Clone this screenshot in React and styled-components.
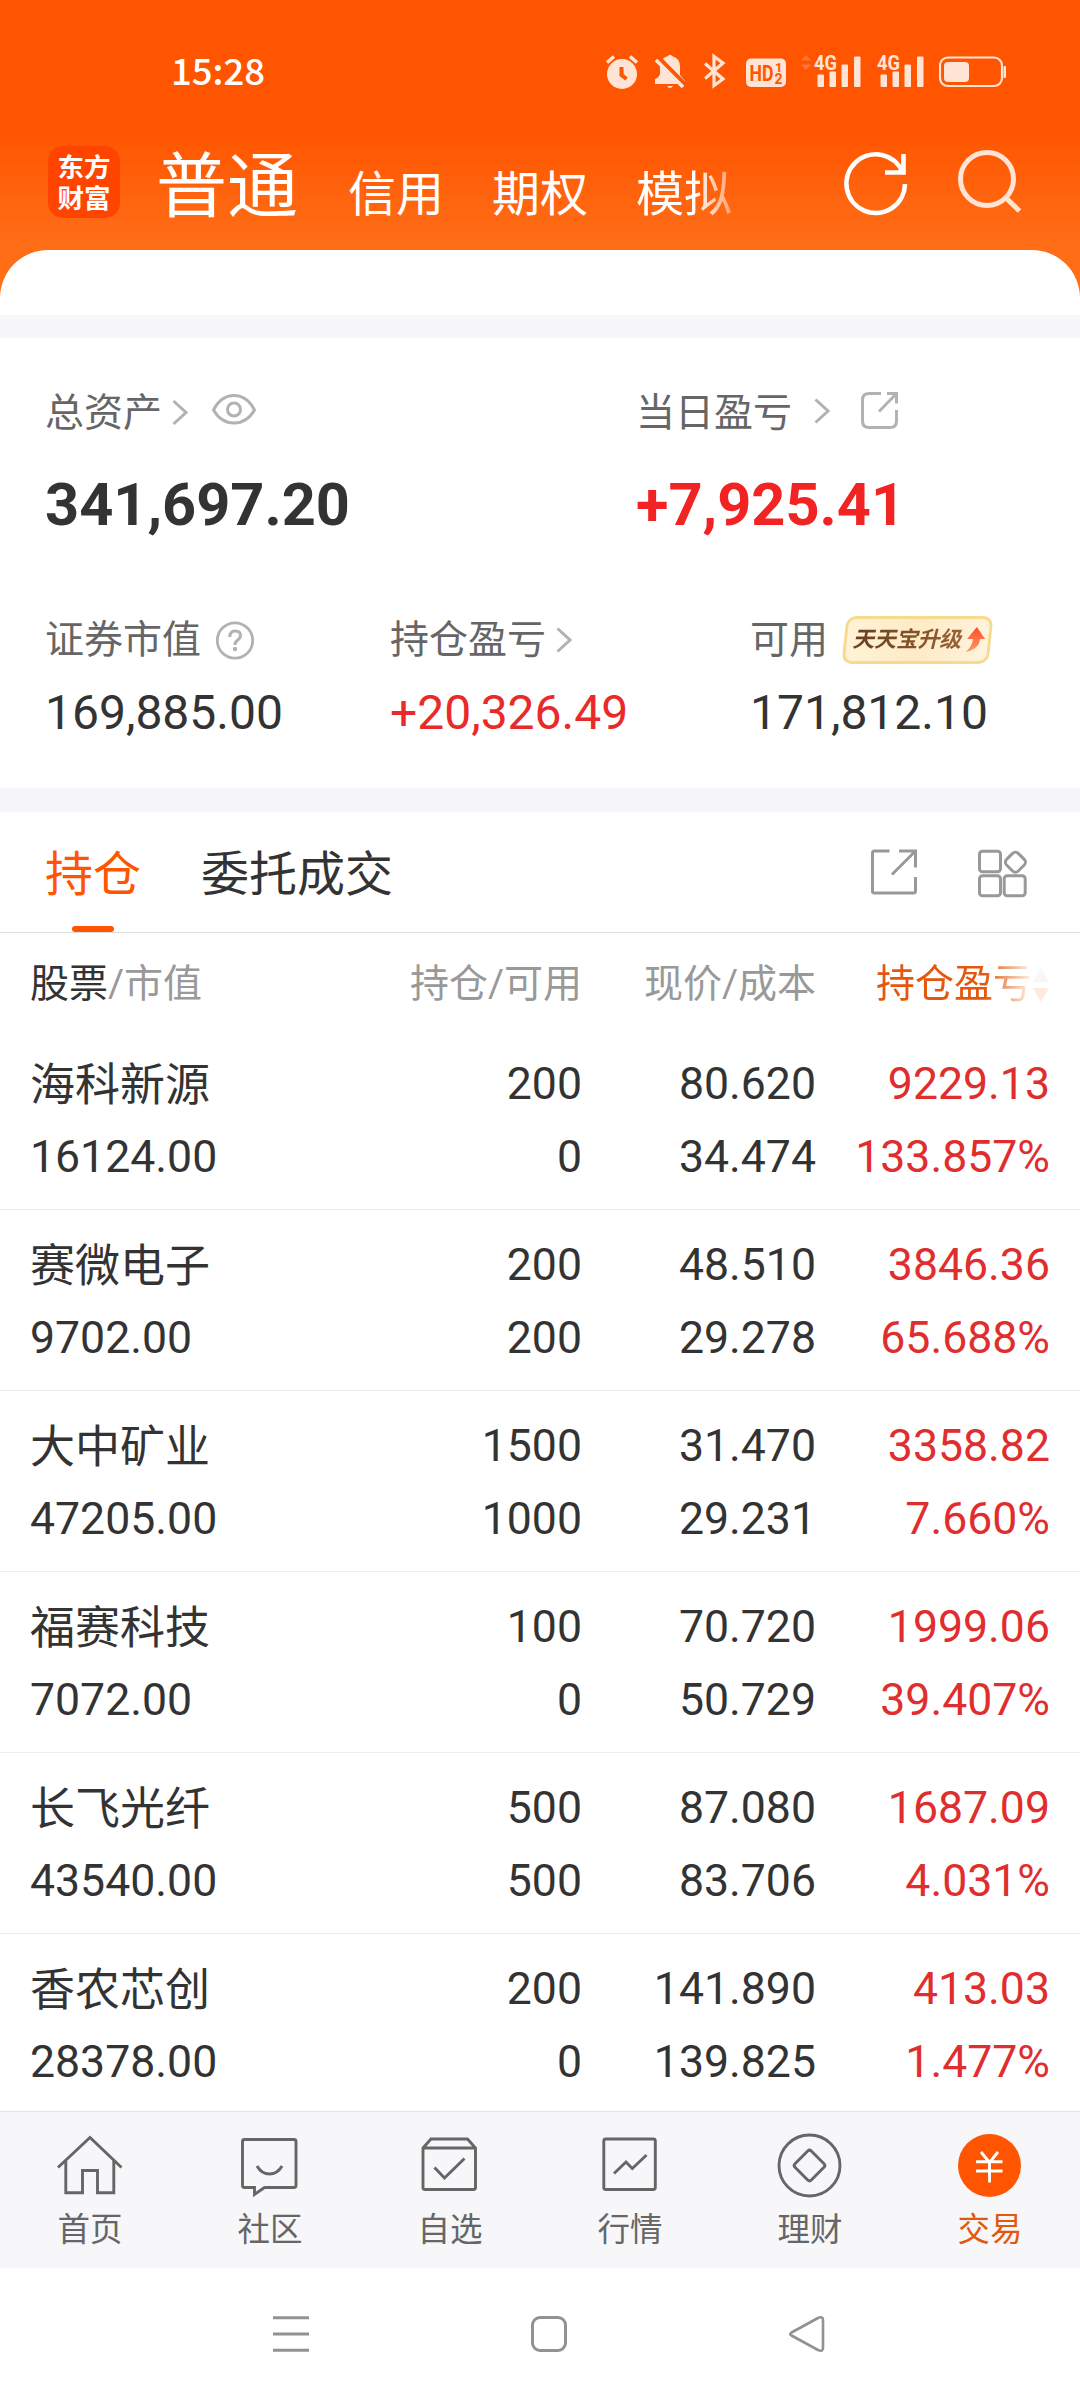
import React from 'react'
import styled, { createGlobalStyle } from 'styled-components'

const GlobalStyle = createGlobalStyle`
    * {
        box-sizing: border-box;
    }
    body {
        margin: 0;
        background: #fff;
        font-family: Roboto, "Noto Sans CJK SC", sans-serif;
        color: #333;
    }
    svg {
        display: block;
        flex: none;
    }
`;

const Screen = styled.div`
    width: 1080px;
    height: 2400px;
    display: flex;
    flex-direction: column;
    overflow: hidden;
    white-space: nowrap;
`;

/* ---------- header ---------- */

const Header = styled.header`
    height: 315px;
    flex: none;
    display: flex;
    flex-direction: column;
    background: linear-gradient(#ff5500 0, #ff5500 130px, #ff6d17 240px, #ff6d17 100%);
`;

const StatusBar = styled.div`
    height: 110px;
    display: flex;
    align-items: flex-start;
    padding: 47px 74px 0 171px;
`;

const Clock = styled.div`
    font: 500 36.5px/52px "Noto Sans CJK SC", sans-serif;
    margin-top: -3px;
    color: #fff;
    flex: 1;
`;

const StatusIcons = styled.div`
    display: flex;
    color: #ffe4d6;
`;

const StatusSvg = styled.svg`
    height: 48px;
    margin-left: ${p => p.$gap || 0}px;
`;

const TopBar = styled.div`
    height: 140px;
    display: flex;
    align-items: flex-start;
    padding-left: 48px;
`;

const Logo = styled.div`
    display: flex;
    flex-direction: column;
    align-items: center;
    width: 72px;
    height: 72px;
    margin-top: 36px;
    padding-top: 6px;
    border-radius: 15px;
    background: #ff4400;
    color: #fff;
    font-size: 26.5px;
    font-weight: 700;
    line-height: 31px;
`;

const AccountTab = styled.div`
    line-height: 80px;
    color: #fff;
    font-size: ${p => (p.$active ? 71 : 48)}px;
    margin-top: ${p => (p.$active ? 37 : 45)}px;
    margin-left: ${p => p.$gap}px;
    ${p => p.$fade && `
        -webkit-mask-image: linear-gradient(90deg, #000 60%, rgba(0, 0, 0, 0.4));
        mask-image: linear-gradient(90deg, #000 60%, rgba(0, 0, 0, 0.4));
    `}
`;

const TopIcons = styled.div`
    display: flex;
    gap: 47px;
    margin: 37px 0 0 111px;
`;

const Sheet = styled.div`
    height: 65px;
    background: #fff;
    border-radius: 48px 48px 0 0;
`;

const Divider = styled.div`
    height: ${p => p.$height}px;
    flex: none;
    background: #f7f7fa;
`;

/* ---------- assets ---------- */

const Assets = styled.section`
    height: 450px;
    flex: none;
    padding: 47px 45px 0;
`;

const AssetGrid = styled.div`
    display: grid;
    grid-template-columns: ${p => p.$columns};
    & + & {
        margin-top: 72px;
    }
`;

const Label = styled.div`
    height: 56px;
    display: flex;
    align-items: center;
    font-size: 39px;
    line-height: 56px;
    color: #666;
`;

const Total = styled.div`
    margin-top: 29px;
    font-size: 59.5px;
    font-weight: 700;
    line-height: 70px;
    color: ${p => (p.$up ? '#f22323' : '#333')};
`;

const Amount = styled.div`
    margin-top: 15px;
    font-size: 48px;
    line-height: 60px;
    color: ${p => (p.$up ? '#e92a2a' : '#333')};
`;

const LabelSvg = styled.svg`
    height: 56px;
    margin-left: ${p => p.$gap}px;
    color: #b2b2b2;
`;

const Promo = styled.div`
    display: flex;
    align-items: center;
    width: 147px;
    height: 48px;
    margin-left: 16px;
    padding-left: 7px;
    border: 3px solid #f8da8d;
    border-radius: 10px;
    background: linear-gradient(90deg, #fff2d6, #feebc6 50%, #fff3dc);
    transform: skewX(-6deg);
`;

const PromoText = styled.span`
    font-size: 22px;
    font-weight: 700;
    line-height: 46px;
    letter-spacing: -0.3px;
    transform: skewX(-8deg);
    background: linear-gradient(90deg, #66401f, #9a6234);
    -webkit-background-clip: text;
    background-clip: text;
    color: transparent;
`;

/* ---------- positions ---------- */

const TabBar = styled.div`
    height: 121px;
    flex: none;
    display: flex;
    padding: 0 52px 0 45px;
    border-bottom: 1px solid #dedede;
`;

const Tab = styled.div`
    display: flex;
    flex-direction: column;
    align-items: center;
    height: 120px;
    margin-right: 60px;
    font-size: 48px;
    line-height: 126px;
    color: ${p => (p.$active ? '#ff5500' : '#333')};
    span {
        height: 114px;
    }
    &::after {
        content: '';
        width: 42px;
        height: 6px;
        border-radius: 3px;
        background: ${p => (p.$active ? '#ff5500' : 'transparent')};
    }
`;

const TabTools = styled.div`
    display: flex;
    gap: 60px;
    margin: 36px 0 0 auto;
`;

const List = styled.div`
    height: 1178px;
    flex: none;
    overflow: hidden;
`;

const Row = styled.div`
    display: grid;
    grid-template-columns: 318px 234px 234px 234px;
    height: 181px;
    padding: 19px 30px 0;
    border-bottom: 1px solid #ededed;
    font-size: 44.6px;
    line-height: 73px;
`;

const HeadRow = styled(Row)`
    height: 96px;
    padding-top: 21px;
    border: 0;
    font-size: 39px;
    line-height: 60px;
    color: #999;
    b {
        font-weight: 400;
        color: #333;
    }
`;

const Cell = styled.div`
    text-align: ${p => (p.$left ? 'left' : 'right')};
    color: ${p => (p.$up ? '#e02e2e' : 'inherit')};
`;

const StockName = styled.div`
    height: 73px;
    font-size: 45px;
    line-height: 75px;
`;

const SortCell = styled.div`
    display: flex;
    align-items: center;
    height: 60px;
    justify-content: flex-end;
    color: #e4570c;
    -webkit-mask-image: linear-gradient(90deg, #000 72%, rgba(0, 0, 0, 0.12) 91%);
    mask-image: linear-gradient(90deg, #000 72%, rgba(0, 0, 0, 0.12) 91%);
`;

/* ---------- bottom ---------- */

const BottomNav = styled.nav`
    height: 157px;
    flex: none;
    display: grid;
    grid-template-columns: repeat(6, 1fr);
    border-top: 1px solid #e3e3e6;
    background: #f7f7fa;
`;

const NavItem = styled.div`
    display: flex;
    flex-direction: column;
    align-items: center;
    padding-top: 18px;
    font-size: 32.5px;
    line-height: 56px;
    color: ${p => (p.$active ? '#e4570c' : '#666')};
`;

const SystemNav = styled.div`
    flex: 1;
    display: flex;
    gap: 222px;
    padding: 48px 0 0 273px;
`;

const AlarmIcon = () => (
    <StatusSvg width="34" viewBox="0 0 34 48" fill="none" stroke="currentColor">
        <circle cx="17" cy="27" r="15" fill="currentColor" stroke="none" />
        <path d="M2 15.500L9 9.500M32 15.500L25 9.500" strokeWidth="3.600" />
        <path d="M16.500 20v8l5 4" stroke="#ff5500" strokeWidth="4" />
    </StatusSvg>
)

const MuteIcon = () => (
    <StatusSvg width="30" $gap="16" viewBox="0 0 30 48" fill="currentColor">
        <path d="M13 9q2-2.500 4 0q8 2 8 11v8l5 6v3H0v-5q5-2 5-6v-6q0-9 8-11z" />
        <path d="M12 39h6q-3 4-6 0z" />
        <path d="M-1 9L30 39" stroke="#ff5500" strokeWidth="4" />
        <path d="M1 13L28 40" stroke="currentColor" strokeWidth="3.600" />
        <path d="M4 10L31 37" stroke="#ff5500" strokeWidth="2.500" />
    </StatusSvg>
)

const BluetoothIcon = () => (
    <StatusSvg width="22" $gap="19" viewBox="0 0 22 48" fill="none" stroke="currentColor" strokeWidth="3.200">
        <path d="M1 16.500L19 32L10 38.500V9.500L19 16L1 31.500" />
    </StatusSvg>
)

const HdIcon = () => (
    <StatusSvg width="40" $gap="20" viewBox="0 0 40 48" fill="#ff5500" fontWeight="700">
        <rect y="11.500" width="40" height="28.500" rx="5" fill="#ffe4d6" />
        <text x="3.500" y="34" fontSize="22" textLength="24" lengthAdjust="spacingAndGlyphs">HD</text>
        <text x="29" y="25" fontSize="13">1</text>
        <text x="28.500" y="37" fontSize="14">2</text>
    </StatusSvg>
)

const SignalIcon = ({ gap, arrows }) => (
    <StatusSvg width="60" $gap={gap} viewBox="0 0 60 48" fill="currentColor">
        {arrows && <path d="M0 13.500L5 8l5 5.500zM0 17.500h10L5 23z" opacity="0.25" />}
        <text x="13" y="23" fontSize="20.500" fontWeight="700" textLength="23" lengthAdjust="spacingAndGlyphs">4G</text>
        <rect x="16.500" y="27.500" width="6.500" height="12.500" rx="1" />
        <rect x="28.500" y="24.500" width="6.500" height="15.500" rx="1" />
        <rect x="40.500" y="17.500" width="6.500" height="22.500" rx="1" />
        <rect x="53" y="9.500" width="6.500" height="30.500" rx="1" />
    </StatusSvg>
)

const BatteryIcon = () => (
    <StatusSvg width="67" $gap="15" viewBox="0 0 67 48" fill="currentColor">
        <rect x="1" y="10.500" width="62" height="28.500" rx="8" fill="none" stroke="currentColor" strokeWidth="2.200" />
        <rect x="5" y="15" width="25" height="20" rx="4" />
        <rect x="64.500" y="19" width="2.500" height="12" rx="1" />
    </StatusSvg>
)

const Chevron = ({ gap, y = 27.5 }) => (
    <LabelSvg width="16" $gap={gap} viewBox="0 0 16 56" fill="none" stroke="currentColor" strokeWidth="3">
        <path d={`M1.500 ${y - 11.5}L14 ${y}L1.500 ${y + 11.5}`} />
    </LabelSvg>
)

const EyeIcon = () => (
    <LabelSvg width="44" $gap="24" viewBox="0 0 44 56" fill="none" stroke="currentColor" strokeWidth="3">
        <path d="M1.500 25Q9 10.500 22 10.500T42.500 25Q35 38 22 38T1.500 25z" />
        <circle cx="22" cy="24.500" r="6.500" />
    </LabelSvg>
)

const ShareSmallIcon = () => (
    <LabelSvg width="38" $gap="31" viewBox="0 0 38 56" fill="none" stroke="currentColor" strokeWidth="3">
        <path d="M20 8.500H8Q1.500 8.500 1.500 15V36Q1.500 42.500 8 42.500H29Q35.500 42.500 35.500 36V25" />
        <path d="M26 8.500H35.500V18.500M35.500 8.500L18 26.500" />
    </LabelSvg>
)

const HelpIcon = () => (
    <LabelSvg width="40" $gap="14" viewBox="0 0 40 56" fill="none" stroke="currentColor" strokeWidth="2.800">
        <circle cx="20" cy="28.500" r="17.700" />
        <path d="M14.800 25Q14.800 19 20.300 19Q25.500 19 25.500 23.500Q25.500 26 22.500 28.200Q20 30 20 33" strokeWidth="3" />
        <circle cx="20" cy="37" r="2.200" fill="currentColor" stroke="none" />
    </LabelSvg>
)

const PromoArrow = () => (
    <svg width="24" height="30" viewBox="0 0 24 30">
        <defs>
            <linearGradient id="promo" x1="0" y1="0" x2="0" y2="1">
                <stop offset="0" stopColor="#ff4a2c" />
                <stop offset="1" stopColor="#ff9c62" />
            </linearGradient>
        </defs>
        <path d="M12.500 2L22 14H17Q17 24 4 27Q10 21 10 14H4z" fill="url(#promo)" />
    </svg>
)

const ShareIcon = () => (
    <svg width="47" height="50" viewBox="0 0 47 50" fill="none" stroke="#999" strokeWidth="3">
        <path d="M18.500 3H3.500Q1.500 3 1.500 5V43.500Q1.500 45 3.500 45H42.500Q44.500 45 44.500 43V29" />
        <path d="M28 3H44.500V19.500M44.500 3L21 26.500" />
    </svg>
)

const GridIcon = () => (
    <svg width="50" height="50" viewBox="0 0 50 50" fill="none" stroke="#999" strokeWidth="3">
        <rect x="1.500" y="3.200" width="21" height="20.500" rx="3" />
        <rect x="1.500" y="27.800" width="21" height="20" rx="3" />
        <rect x="26.200" y="27.800" width="21" height="20" rx="3" />
        <rect x="29.200" y="6" width="16.500" height="16.500" rx="4" transform="rotate(45 37.500 14.200)" />
    </svg>
)

const navIcons = {
    home: (
        <>
            <path d="M4 37.500L36 7.500L67.500 37.500" />
            <path d="M11.800 31V62.800H28.500V40.500H43.500V62.800H59.800V31" />
        </>
    ),
    community: (
        <>
            <path d="M10.500 9.500H60Q62 9.500 62 11.500V55.500Q62 57.500 60 57.500H30.500L20.500 64.500V57.500H10.500Q8.500 57.500 8.500 55.500V11.500Q8.500 9.500 10.500 9.500z" />
            <path d="M23 36Q27.500 44 35.500 44T48 36" />
        </>
    ),
    watch: (
        <>
            <path d="M9 18L17 9H53.500L61.500 18V57.500Q61.500 59.500 59.500 59.500H11Q9 59.500 9 57.500zH61.500" />
            <path d="M20.500 37.500L30.500 48L50.500 28.500" />
        </>
    ),
    market: (
        <>
            <rect x="9.800" y="9" width="51.500" height="50.500" rx="2" />
            <path d="M20 43.500L32 32L38.300 38.500L52.500 25" />
        </>
    ),
    finance: (
        <>
            <circle cx="35.500" cy="35.500" r="30.500" />
            <rect x="24" y="24" width="23" height="23" rx="2.500" transform="rotate(45 35.500 35.500)" />
        </>
    ),
    trade: (
        <>
            <circle cx="35.500" cy="35.500" r="31.500" fill="#ff5500" stroke="none" />
            <path d="M27 22L35.500 32.500L44 22M35.500 32V52.500M22 31.800H48.500M22 41H48.500" stroke="#fff" />
        </>
    ),
}

const positions = [
    ['海科新源', '16124.00', '200', '0', '80.620', '34.474', '9229.13', '133.857%'],
    ['赛微电子', '9702.00', '200', '200', '48.510', '29.278', '3846.36', '65.688%'],
    ['大中矿业', '47205.00', '1500', '1000', '31.470', '29.231', '3358.82', '7.660%'],
    ['福赛科技', '7072.00', '100', '0', '70.720', '50.729', '1999.06', '39.407%'],
    ['长飞光纤', '43540.00', '500', '500', '87.080', '83.706', '1687.09', '4.031%'],
    ['香农芯创', '28378.00', '200', '0', '141.890', '139.825', '413.03', '1.477%'],
]

const navItems = [
    ['home', '首页'],
    ['community', '社区'],
    ['watch', '自选'],
    ['market', '行情'],
    ['finance', '理财'],
    ['trade', '交易'],
]

const PageHeader = () => (
    <Header>
        <StatusBar>
            <Clock>15:28</Clock>
            <StatusIcons>
                <AlarmIcon />
                <MuteIcon />
                <BluetoothIcon />
                <HdIcon />
                <SignalIcon gap={15} arrows />
                <SignalIcon gap={3} />
                <BatteryIcon />
            </StatusIcons>
        </StatusBar>
        <TopBar>
            <Logo>
                <span>东方</span>
                <span>财富</span>
            </Logo>
            <AccountTab $active $gap={36}>普通</AccountTab>
            <AccountTab $gap={50}>信用</AccountTab>
            <AccountTab $gap={48}>期权</AccountTab>
            <AccountTab $gap={48} $fade>模拟</AccountTab>
            <TopIcons>
                <svg width="68" height="72" viewBox="0 0 68 72" fill="none" stroke="#fff" strokeWidth="4.600">
                    <path d="M62 37A29.300 29.300 0 1 1 60 26" />
                    <path d="M60.500 7V25.500H42" />
                </svg>
                <svg width="68" height="72" viewBox="0 0 68 72" fill="none" stroke="#ffe4d6" strokeWidth="5">
                    <circle cx="29" cy="32" r="26.500" />
                    <path d="M48 51L61.500 64" />
                </svg>
            </TopIcons>
        </TopBar>
        <Sheet />
    </Header>
)

const AssetSummary = () => (
    <Assets>
        <AssetGrid $columns="591px 1fr">
            <div>
                <Label>总资产<Chevron gap={10} /><EyeIcon /></Label>
                <Total>341,697.20</Total>
            </div>
            <div>
                <Label>当日盈亏<Chevron gap={22} y={26} /><ShareSmallIcon /></Label>
                <Total $up>+7,925.41</Total>
            </div>
        </AssetGrid>
        <AssetGrid $columns="345px 360px 1fr">
            <div>
                <Label>证券市值<HelpIcon /></Label>
                <Amount>169,885.00</Amount>
            </div>
            <div>
                <Label>持仓盈亏<Chevron gap={10} y={28} /></Label>
                <Amount $up>+20,326.49</Amount>
            </div>
            <div>
                <Label>
                    可用
                    <Promo><PromoText>天天宝升级</PromoText><PromoArrow /></Promo>
                </Label>
                <Amount>171,812.10</Amount>
            </div>
        </AssetGrid>
    </Assets>
)

const PositionList = () => (
    <List>
        <HeadRow>
            <Cell $left><b>股票</b>/市值</Cell>
            <Cell>持仓/可用</Cell>
            <Cell>现价/成本</Cell>
            <SortCell>
                持仓盈亏
                <svg width="18" height="40" viewBox="0 0 18 40">
                    <path d="M1 18L9 4l8 14z" fill="#bbb" />
                    <path d="M1 24h16L9 38z" fill="#ff5500" />
                </svg>
            </SortCell>
        </HeadRow>
        {positions.map(([name, value, held, usable, price, cost, profit, rate]) => (
            <Row key={name}>
                <Cell $left><StockName>{name}</StockName>{value}</Cell>
                <Cell>{held}<br />{usable}</Cell>
                <Cell>{price}<br />{cost}</Cell>
                <Cell $up>{profit}<br />{rate}</Cell>
            </Row>
        ))}
    </List>
)

export default function App() {
    return (
        <Screen>
            <GlobalStyle />
            <PageHeader />
            <Divider $height={23} />
            <AssetSummary />
            <Divider $height={24} />
            <TabBar>
                <Tab $active><span>持仓</span></Tab>
                <Tab><span>委托成交</span></Tab>
                <TabTools>
                    <ShareIcon />
                    <GridIcon />
                </TabTools>
            </TabBar>
            <PositionList />
            <BottomNav>
                {navItems.map(([icon, label]) => (
                    <NavItem key={icon} $active={icon === 'trade'}>
                        <svg width="72" height="72" viewBox="0 0 72 72" fill="none" stroke="#666" strokeWidth="2.900">
                            {navIcons[icon]}
                        </svg>
                        {label}
                    </NavItem>
                ))}
            </BottomNav>
            <SystemNav>
                <svg width="36" height="36" viewBox="0 0 36 36" stroke="#929292" strokeWidth="3">
                    <path d="M0 1.700H36M0 18H36M0 34.300H36" />
                </svg>
                <svg width="36" height="36" viewBox="0 0 36 36" fill="none" stroke="#929292" strokeWidth="3">
                    <rect x="1.500" y="1.500" width="33" height="33" rx="7.500" />
                </svg>
                <svg width="36" height="36" viewBox="0 0 36 36" fill="none" stroke="#929292" strokeWidth="2.600" strokeLinejoin="round">
                    <path d="M2.500 16.500L29 2Q34 0 34 4V32Q34 36 29 34L2.500 19.500Q0 18 2.500 16.500z" />
                </svg>
            </SystemNav>
        </Screen>
    )
}
